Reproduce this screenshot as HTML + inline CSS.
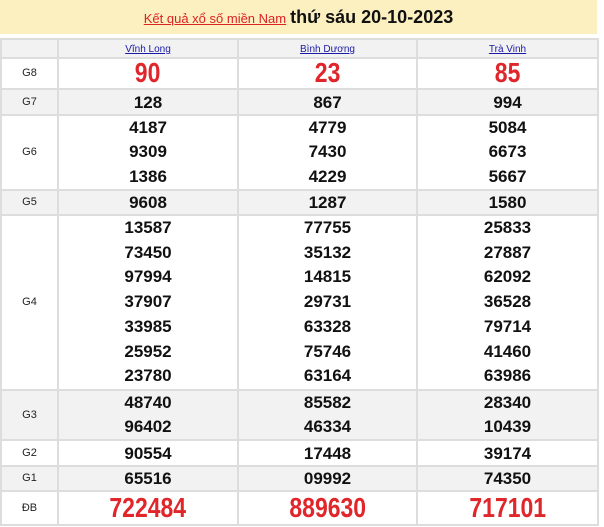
<!DOCTYPE html>
<html><head><meta charset="utf-8"><style>
body{margin:0;background:#fff;width:604px;height:527px;overflow:hidden;font-family:"Liberation Sans",Arial,sans-serif}
.hd{position:absolute;left:0;top:0;width:597px;height:34px;background:#fcefc0;text-align:center;line-height:34px}
.hd a{color:#d22;font-size:13px;text-decoration:underline}
.hd b{font-size:18px;color:#111;margin-left:4px}
table{position:absolute;left:0;top:38px;width:598px;border-collapse:collapse;table-layout:fixed}
td{border:2px solid #ddd;text-align:center;padding:0;font-weight:bold;font-size:17px;color:#111;line-height:23px;overflow:hidden}
td.l{font-weight:normal;font-size:11px;color:#222}
tr.g td{background:#f2f2f2}
.c a{color:#1a1aa6;font-size:10px;font-weight:normal;text-decoration:underline}
.r span{display:inline-block;color:#e0252b;font-size:28px;transform:scaleX(.82);line-height:28px}
</style></head><body>
<div class="hd"><a>Kết quả xổ số miền Nam</a><b>thứ sáu 20-10-2023</b></div>
<table>
<colgroup><col style="width:57px"><col style="width:180px"><col style="width:179px"><col style="width:181px"></colgroup>
<tr class="g c" style="height:19px"><td class="l"></td><td style="line-height:14px"><a>Vĩnh Long</a></td><td style="line-height:14px"><a>Bình Dương</a></td><td style="line-height:14px"><a>Trà Vinh</a></td></tr>
<tr style="height:31px"><td class="l">G8</td><td class="r"><span>90</span></td><td class="r"><span>23</span></td><td class="r"><span>85</span></td></tr>
<tr class="g" style="height:26px"><td class="l">G7</td><td>128</td><td>867</td><td>994</td></tr>
<tr style="height:75px;line-height:24.3px"><td class="l">G6</td><td style="line-height:24.3px">4187<br>9309<br>1386</td><td style="line-height:24.3px">4779<br>7430<br>4229</td><td style="line-height:24.3px">5084<br>6673<br>5667</td></tr>
<tr class="g" style="height:25px"><td class="l">G5</td><td>9608</td><td>1287</td><td>1580</td></tr>
<tr style="height:175px"><td class="l">G4</td><td style="line-height:24.7px">13587<br>73450<br>97994<br>37907<br>33985<br>25952<br>23780</td><td style="line-height:24.7px">77755<br>35132<br>14815<br>29731<br>63328<br>75746<br>63164</td><td style="line-height:24.7px">25833<br>27887<br>62092<br>36528<br>79714<br>41460<br>63986</td></tr>
<tr class="g" style="height:50px"><td class="l">G3</td><td style="line-height:24px">48740<br>96402</td><td style="line-height:24px">85582<br>46334</td><td style="line-height:24px">28340<br>10439</td></tr>
<tr style="height:26px"><td class="l">G2</td><td>90554</td><td>17448</td><td>39174</td></tr>
<tr class="g" style="height:25px"><td class="l">G1</td><td>65516</td><td>09992</td><td>74350</td></tr>
<tr style="height:34px"><td class="l">ĐB</td><td class="r"><span>722484</span></td><td class="r"><span>889630</span></td><td class="r"><span>717101</span></td></tr>
</table>
</body></html>
